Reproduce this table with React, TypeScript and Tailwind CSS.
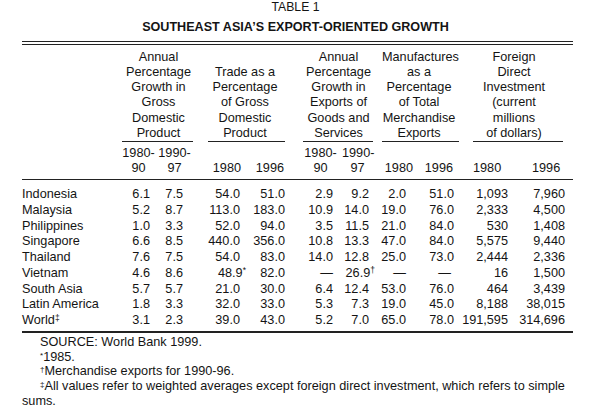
import React from 'react';

// Column template: label | c1 c2 | gap | c3 c4 | gap | c5 c6 | gap | c7 c8 | gap | c9 c10
const GRID =
  'grid grid-cols-[100px_34px_37px_15px_38px_39px_18px_35px_35px_9px_31px_46px_14px_46px_54px]';

// right padding of each numeric column so the figures line up like the print
const PAD = [
  'pr-[6px]',
  'pr-[10px]',
  'pr-[6px]',
  'pr-0',
  'pr-[5px]',
  'pr-[4px]',
  'pr-[7px]',
  'pr-[5px]',
  'pr-[11px]',
  'pr-[8px]',
];

const Dash = () => <span>—</span>;

function Hang({ value, mark }: { value: string; mark: string }) {
  // footnote mark hangs past the column edge, figure stays aligned
  return (
    <span>
      {value}
      <sup className="text-[8.5px] -mr-[6px] -top-[0.4em]">{mark}</sup>
    </span>
  );
}

type Row = [React.ReactNode, ...React.ReactNode[]];

const rows: Row[] = [
  ['Indonesia', '6.1', '7.5', '54.0', '51.0', '2.9', '9.2', '2.0', '51.0', '1,093', '7,960'],
  ['Malaysia', '5.2', '8.7', '113.0', '183.0', '10.9', '14.0', '19.0', '76.0', '2,333', '4,500'],
  ['Philippines', '1.0', '3.3', '52.0', '94.0', '3.5', '11.5', '21.0', '84.0', '530', '1,408'],
  ['Singapore', '6.6', '8.5', '440.0', '356.0', '10.8', '13.3', '47.0', '84.0', '5,575', '9,440'],
  ['Thailand', '7.6', '7.5', '54.0', '83.0', '14.0', '12.8', '25.0', '73.0', '2,444', '2,336'],
  [
    'Vietnam',
    '4.6',
    '8.6',
    <Hang value="48.9" mark="*" />,
    '82.0',
    <Dash />,
    <Hang value="26.9" mark="†" />,
    <Dash />,
    <span className="pr-[3px]">—</span>,
    '16',
    '1,500',
  ],
  ['South Asia', '5.7', '5.7', '21.0', '30.0', '6.4', '12.4', '53.0', '76.0', '464', '3,439'],
  ['Latin America', '1.8', '3.3', '32.0', '33.0', '5.3', '7.3', '19.0', '45.0', '8,188', '38,015'],
  [
    <span>
      World<sup className="text-[8.5px] -top-[0.4em]">‡</sup>
    </span>,
    '3.1',
    '2.3',
    '39.0',
    '43.0',
    '5.2',
    '7.0',
    '65.0',
    '78.0',
    '191,595',
    '314,696',
  ],
];

function DataRow({ row }: { row: Row }) {
  const [label, ...values] = row;
  const cells: React.ReactNode[] = [];
  values.forEach((v, i) => {
    // flex-end so a figure wider than its column spills to the left, like print
    cells.push(
      <div key={i} className={`flex justify-end whitespace-nowrap ${PAD[i]}`}>
        {v}
      </div>
    );
    if (i === 1 || i === 3 || i === 5 || i === 7) cells.push(<div key={`gap-${i}`} />);
  });
  return (
    <div className={GRID}>
      <div className="whitespace-nowrap">{label}</div>
      {cells}
    </div>
  );
}

function Lines({ items }: { items: string[] }) {
  return (
    <>
      {items.map((t, i) => (
        <div key={i} className="whitespace-nowrap">
          {t}
        </div>
      ))}
    </>
  );
}

export default function App() {
  return (
    <div className="w-[600px] h-[418px] bg-white text-[#141414] font-['Liberation_Sans',Arial,sans-serif] text-[12.7px] overflow-hidden">
      <div className="pl-[22px] w-[573px]">
        <div className="text-center text-[12.2px] leading-[14px] pr-[4px]">TABLE 1</div>
        <div className="mt-[6px] text-center font-bold text-[12.6px] leading-[14px] pr-[4px]">
          SOUTHEAST ASIA’S EXPORT-ORIENTED GROWTH
        </div>

        {/* double rule */}
        <div className="mt-[7px] h-[4px] border-t border-b border-[#222]" />

        {/* column group headings */}
        <div className={`${GRID} items-end leading-[15.25px] pt-[4.5px]`}>
          <div />
          <div className="col-span-2 text-center border-b border-[#222] pl-[2px]">
            <Lines items={['Annual', 'Percentage', 'Growth in', 'Gross', 'Domestic', 'Product']} />
          </div>
          <div />
          <div className="col-span-2 text-center border-b border-[#222] pr-[3px]">
            <Lines items={['Trade as a', 'Percentage', 'of Gross', 'Domestic', 'Product']} />
          </div>
          <div />
          <div className="col-span-2 text-center border-b border-[#222] pl-[1px]">
            <Lines items={['Annual', 'Percentage', 'Growth in', 'Exports of', 'Goods and', 'Services']} />
          </div>
          <div />
          <div className="col-span-2 text-center border-b border-[#222] pr-[3px]">
            <Lines
              items={['Manufactures', 'as a', 'Percentage', 'of Total', 'Merchandise', 'Exports']}
            />
          </div>
          <div />
          <div className="col-span-2 text-center border-b border-[#222] mr-[10px] pr-[8px]">
            <Lines
              items={['Foreign', 'Direct', 'Investment', '(current', 'millions', 'of dollars)']}
            />
          </div>
        </div>

        {/* year headings */}
        <div className={`${GRID} items-end leading-[15.25px] mt-[4px]`}>
          <div />
          <div className="text-center pr-[1px]">
            <Lines items={['1980-', '90']} />
          </div>
          <div className="text-center">
            <Lines items={['1990-', '97']} />
          </div>
          <div />
          <div className="text-right pr-[5px]">1980</div>
          <div className="text-right pr-[1px]">1996</div>
          <div />
          <div className="text-center">
            <Lines items={['1980-', '90']} />
          </div>
          <div className="text-center pl-[4px]">
            <Lines items={['1990-', '97']} />
          </div>
          <div />
          <div className="text-right">1980</div>
          <div className="text-right pr-[6px]">1996</div>
          <div />
          <div className="text-left">1980</div>
          <div className="text-left pl-[13px]">1996</div>
        </div>

        <div className="mt-[2.5px] border-t-[1.5px] border-[#222]" />

        <div className="pt-[7px] leading-[15.75px]">
          {rows.map((r, i) => (
            <DataRow key={i} row={r} />
          ))}
        </div>

        <div className="mt-[2px] border-t-2 border-[#222]" />

        <div className="leading-[14.75px] pt-[2px]">
          <p className="indent-[18px]">SOURCE: World Bank 1999.</p>
          <p className="indent-[18px]">
            <sup className="text-[8px] -top-[0.35em]">*</sup>1985.
          </p>
          <p className="indent-[18px]">
            <sup className="text-[8px] -top-[0.35em]">†</sup>Merchandise exports for 1990-96.
          </p>
          <p className="indent-[18px]">
            <sup className="text-[8px] -top-[0.35em]">‡</sup>All values refer to weighted averages
            except foreign direct investment, which refers to simple sums.
          </p>
        </div>
      </div>
    </div>
  );
}
